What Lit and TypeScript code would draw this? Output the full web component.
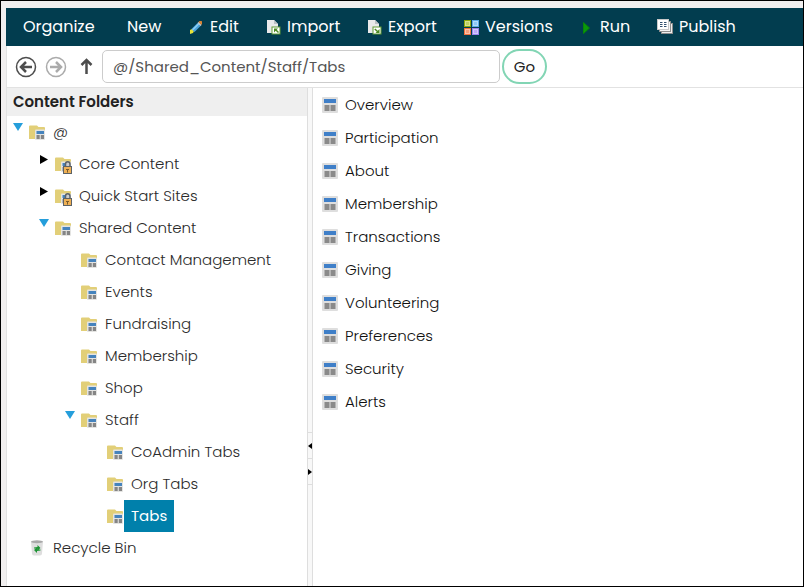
import { LitElement, html, svg, css, nothing, TemplateResult } from "lit";
import { customElement } from "lit/decorators.js";
import { classMap } from "lit/directives/class-map.js";

interface Folder {
  name: string;
  icon?: "folder" | "locked" | "bin";
  open?: boolean;
  selected?: boolean;
  children?: Folder[];
}

const folderShape = svg`
  <path d="M0 2.500q0-1 1-1h7l1.500 1.500H15q1 0 1 1V15H0z" fill="#e2cf78"/>
  <rect x="6" y="5.500" width="10" height="10.500" rx="1" fill="#e4e4e2"/>
  <rect x="7.500" y="7" width="7.500" height="3" fill="#4583bd"/>
  <rect x="7.500" y="11" width="3.200" height="4" fill="#858585"/>
  <rect x="11.800" y="11" width="3.200" height="4" fill="#858585"/>`;

const icons: Record<string, TemplateResult> = {
  folder: html`<svg class="icon" viewBox="0 0 16 16" aria-hidden="true">${folderShape}</svg>`,
  locked: html`<svg class="icon spill" viewBox="0 0 16 16" aria-hidden="true">${folderShape}
    <path d="M10.500 10V8a2 2 0 0 1 4.500 0v2" fill="#c9ccd0" stroke="#5c6266" stroke-width="1.500"/>
    <rect x="8.500" y="10.500" width="8" height="7" fill="#eeb055" stroke="#5c6266"/>
    <path d="M11 13.500h3M12.500 13.500v3" stroke="#795a2a"/></svg>`,
  bin: html`<svg class="icon" viewBox="0 0 16 16" aria-hidden="true">
    <path d="M2 1.500h12l-1 12q0 2-2 2H5q-2 0-2-2z" fill="#dedede"/>
    <ellipse cx="8" cy="1.700" rx="6" ry="1.500" fill="#a9a9a9"/>
    <path d="M5 7.500L8.500 7V5l3 3-2.500 2-1-1.500H5zM11.500 10.500L8 11v2l-3-3 2.500-2 1 1.500h3z" fill="#1d9434"/></svg>`,
  page: html`<svg class="icon" viewBox="0 0 16 16" aria-hidden="true">
    <rect width="16" height="16" rx="1" fill="#dedede"/>
    <rect x="2" y="2" width="12" height="4" fill="#3f7fc8"/>
    <rect x="2.500" y="8" width="5" height="6" fill="#8a8a8a"/>
    <rect x="8.500" y="8" width="5" height="6" fill="#8a8a8a"/></svg>`,
  edit: html`<svg class="icon" viewBox="0 0 16 16" aria-hidden="true">
    <path d="M2 11l2-1 2 2-1 2-3 1z" fill="#e8e337"/>
    <path d="M3.500 10L9.500 4l3 3-6 6z" fill="#4ba3dc"/>
    <path d="M4 10.500l6-6 1 1-6 6z" fill="#8fd0f4"/>
    <path d="M9.500 4l1-1 3 3-1 1z" fill="#d8d8d8"/>
    <path d="M10.500 3l1-1h2l.5.5v2L13.500 6z" fill="#d98536"/></svg>`,
  import: html`<svg class="icon" viewBox="0 0 16 16" aria-hidden="true">
    <path d="M2 1h7l4 4v9H2z" fill="#e9e9ea"/><path d="M9 1l4 4H9z" fill="#bcc1c4"/>
    <rect x="7" y="8" width="8" height="7" fill="#ffffff" stroke="#639c35"/>
    <path d="M9 13.500V9.500h4L11.700 10.800l2.300 2.200-1 1L10.700 11.800z" fill="#4c8a22"/></svg>`,
  export: html`<svg class="icon" viewBox="0 0 16 16" aria-hidden="true">
    <path d="M2 1h7l4 4v9H2z" fill="#e9e9ea"/><path d="M9 1l4 4H9z" fill="#bcc1c4"/>
    <rect x="7" y="8" width="8" height="7" fill="#ffffff" stroke="#639c35"/>
    <path d="M13.500 10v4h-4l1.300-1.300L8.300 10.500l1-1 2.500 2.200z" fill="#4c8a22"/></svg>`,
  versions: html`<svg class="icon" viewBox="0 0 16 16" aria-hidden="true">
    <rect x="1" y="1" width="7" height="7" fill="#8ba60b"/><rect x="2.500" y="2.500" width="4" height="4" fill="#bccd62" stroke="#d6e08f"/>
    <rect x="9" y="1" width="7" height="7" fill="#5aaae8"/><rect x="10.500" y="2.500" width="4" height="4" fill="#8cc9f6" stroke="#b4ddfa"/>
    <rect x="1" y="9" width="7" height="7" fill="#f0703c"/><rect x="2.500" y="10.500" width="4" height="4" fill="#f69d78" stroke="#fbc0a8"/>
    <rect x="9" y="9" width="7" height="7" fill="#9b83ee"/><rect x="10.500" y="10.500" width="4" height="4" fill="#bda9f9" stroke="#d5c9fb"/></svg>`,
  run: html`<svg class="icon" viewBox="0 0 16 16" aria-hidden="true">
    <path d="M5.500 3.500v11l6-5.500z" fill="#0b980b" stroke="#078807"/></svg>`,
  publish: html`<svg class="icon" viewBox="0 0 16 16" aria-hidden="true">
    <rect x="4.500" y="4.500" width="11" height="10" fill="#eeeeee" stroke="#8d8d8d"/>
    <rect x="2.500" y="2.500" width="11" height="10" fill="#f4f4f4" stroke="#8d8d8d"/>
    <rect x=".5" y=".5" width="11" height="10" fill="#ffffff" stroke="#c9c9c9"/>
    <path d="M3 3.500h3M7 3.500h3M3 5.500h3M7 5.500h3M3 7.500h3M7 7.500h3" stroke="#33506e" stroke-dasharray="2 .5"/></svg>`,
};

const commands: Array<{ label: string; icon?: string }> = [
  { label: "Organize" },
  { label: "New" },
  { label: "Edit", icon: "edit" },
  { label: "Import", icon: "import" },
  { label: "Export", icon: "export" },
  { label: "Versions", icon: "versions" },
  { label: "Run", icon: "run" },
  { label: "Publish", icon: "publish" },
];

const folders: Folder[] = [
  {
    name: "@",
    open: true,
    children: [
      { name: "Core Content", icon: "locked", open: false },
      { name: "Quick Start Sites", icon: "locked", open: false },
      {
        name: "Shared Content",
        open: true,
        children: [
          { name: "Contact Management" },
          { name: "Events" },
          { name: "Fundraising" },
          { name: "Membership" },
          { name: "Shop" },
          {
            name: "Staff",
            open: true,
            children: [
              { name: "CoAdmin Tabs" },
              { name: "Org Tabs" },
              { name: "Tabs", selected: true },
            ],
          },
        ],
      },
    ],
  },
  { name: "Recycle Bin", icon: "bin" },
];

const documents = [
  "Overview", "Participation", "About", "Membership", "Transactions",
  "Giving", "Volunteering", "Preferences", "Security", "Alerts",
];

@customElement("app-root")
export class AppRoot extends LitElement {
  static styles = css`
    :host {
      display: block;
      font-family: Poppins, Inter, "Open Sans", sans-serif;
      font-size: 16px;
      line-height: 24px;
      color: #2b2b2b;
    }
    * { box-sizing: border-box; }
    button, input { font: inherit; color: inherit; margin: 0; }
    button { padding: 0; border: 0; background: none; cursor: pointer; }
    a { color: inherit; text-decoration: none; }
    ul { list-style: none; margin: 0; padding: 0; }
    svg { display: block; flex: none; }
    .icon { width: 16px; height: 16px; }
    .spill { overflow: visible; }
    .shell {
      display: flex;
      flex-direction: column;
      min-height: 100vh;
      padding: 7px 0 0 5px;
      border: 1px solid #000000;
      background: #f1efef;
    }
    .commands {
      display: grid;
      grid-template-columns: 104px 61px 77px 101px 97px 115px 79px auto;
      justify-content: start;
      height: 38px;
      padding-left: 17px;
      background: #023d4f;
      color: #ffffff;
    }
    .command { display: flex; align-items: center; gap: 6px; }
    .address {
      display: flex;
      align-items: center;
      height: 42px;
      padding: 0 8px;
      border: solid #e2e2e2;
      border-width: 0 0 1px 1px;
      background: #ffffff;
    }
    .nav { display: flex; width: 30px; height: 24px; align-items: center; }
    .up { width: 27px; }
    .field {
      flex: 0 1 398px;
      min-width: 0;
      height: 33px;
      padding: 0 10px;
      border: 1px solid #cccccc;
      border-radius: 5px;
      background: #ffffff;
      color: #555555;
      font-size: 15px;
    }
    .go {
      width: 45px;
      height: 35px;
      margin-left: 2px;
      border: 2px solid #82d5b4;
      border-radius: 18px;
      background: #ffffff;
      color: #222222;
      font-size: 15px;
    }
    .main {
      flex: 1;
      display: grid;
      grid-template-columns: 300px 6px 1fr;
      border-left: 1px solid #e2e2e2;
      background: #ffffff;
    }
    .title {
      margin: 0;
      padding: 2px 6px;
      background: #efefef;
      color: #222222;
      font-size: 15px;
      font-weight: 600;
    }
    .tree, .documents { font-size: 15px; font-weight: 300; }
    .branch { padding-left: 26px; }
    .row { display: flex; align-items: center; height: 32px; }
    .row .icon { margin-right: 1px; }
    .toggle {
      display: flex;
      align-items: flex-start;
      width: 22px;
      height: 32px;
      padding: 7px 0 0 6px;
    }
    .label { padding: 4px 7px; white-space: nowrap; }
    .selected { background: #0080ab; color: #ffffff; font-weight: 400; }
    .splitter {
      display: flex;
      flex-direction: column;
      padding-top: 344px;
      border: solid #dedede;
      border-width: 0 1px;
      background: #f8f8f8;
    }
    .collapse {
      display: flex;
      align-items: center;
      height: 26px;
      border-top: 1px solid #dedede;
    }
    .collapse:last-child { height: 27px; border-bottom: 1px solid #dedede; }
    .documents { padding-left: 9px; color: #111111; }
    .document { display: flex; align-items: center; gap: 7px; height: 33px; }
  `;

  private toggle(open: boolean) {
    return html`<svg width="11" height="10" viewBox="0 0 11 10" aria-hidden="true">
      ${open
        ? svg`<path d="M0 0h10L5 8z" fill="#259edb"/>`
        : svg`<path d="M1 0v9l8-4.500z" fill="#000000"/>`}
    </svg>`;
  }

  private folder(item: Folder): TemplateResult {
    const expandable = item.open !== undefined;
    return html`<li role="treeitem" aria-expanded=${expandable ? String(item.open) : nothing}
      aria-selected=${item.selected ? "true" : "false"}>
      <div class="row">
        ${expandable
          ? html`<button class="toggle" aria-label="Toggle ${item.name}">${this.toggle(!!item.open)}</button>`
          : html`<span class="toggle"></span>`}
        ${icons[item.icon ?? "folder"]}
        <a href="#" class=${classMap({ label: true, selected: !!item.selected })}>${item.name}</a>
      </div>
      ${item.children
        ? html`<ul class="branch" role="group">${item.children.map((c) => this.folder(c))}</ul>`
        : nothing}
    </li>`;
  }

  private arrow(color: string, path: string) {
    return html`<svg width="22" height="22" viewBox="0 0 22 22" fill="none" stroke=${color} aria-hidden="true">
      <circle cx="11" cy="11" r="9.500" stroke-width="1.500"/>
      <path d=${path} stroke-width="2.500"/></svg>`;
  }

  render() {
    return html`<div class="shell">
      <nav class="commands" aria-label="Commands">
        ${commands.map((c) => html`<button class="command">${c.icon ? icons[c.icon] : nothing}<span>${c.label}</span></button>`)}
      </nav>
      <form class="address" @submit=${(e: Event) => e.preventDefault()}>
        <button type="button" class="nav" aria-label="Back">${this.arrow("#4d4d4d", "M17 11H6M11 6l-5 5 5 5")}</button>
        <button type="button" class="nav" aria-label="Forward">${this.arrow("#ababab", "M5 11h11M11 6l5 5-5 5")}</button>
        <button type="button" class="nav up" aria-label="Up one level">
          <svg width="22" height="22" viewBox="0 0 22 22" fill="none" stroke="#4d4d4d" stroke-width="2.500" aria-hidden="true">
            <path d="M11.500 18V4M6.500 9l5-5 5 5"/></svg>
        </button>
        <input class="field" aria-label="Path" value="@/Shared_Content/Staff/Tabs">
        <button class="go">Go</button>
      </form>
      <div class="main">
        <aside>
          <h2 class="title">Content Folders</h2>
          <ul class="tree" role="tree" aria-label="Content Folders">${folders.map((f) => this.folder(f))}</ul>
        </aside>
        <div class="splitter">
          <button class="collapse" aria-label="Collapse folders">
            <svg width="4" height="6" viewBox="0 0 4 6"><path d="M4 0v6L0 3z"/></svg></button>
          <button class="collapse" aria-label="Expand folders">
            <svg width="4" height="6" viewBox="0 0 4 6"><path d="M0 0v6l4-3z"/></svg></button>
        </div>
        <ul class="documents">
          ${documents.map((d) => html`<li><a class="document" href="#">${icons.page}<span>${d}</span></a></li>`)}
        </ul>
      </div>
    </div>`;
  }
}
